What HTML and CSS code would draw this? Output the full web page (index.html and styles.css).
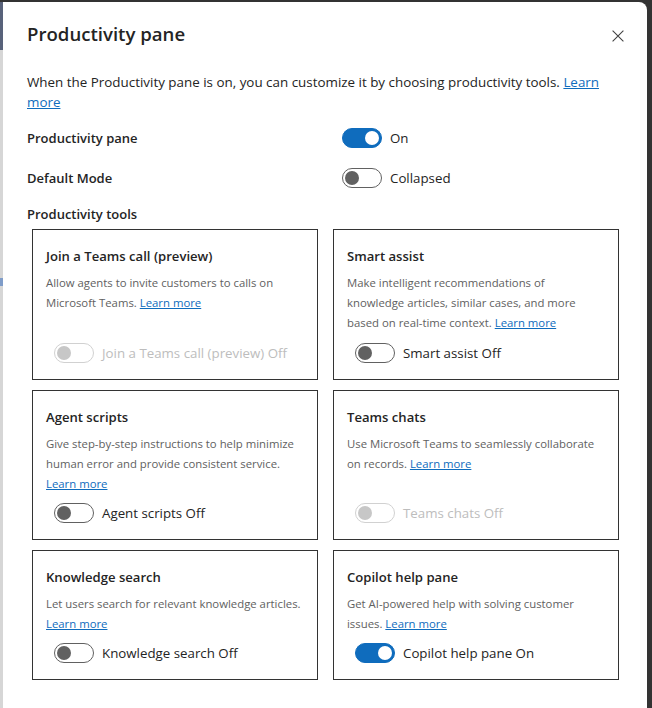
FILE: index.html
```html
<!DOCTYPE html>
<html lang="en">
<head>
<meta charset="utf-8">
<title>Productivity pane</title>
<link rel="stylesheet" href="styles.css">
</head>
<body>
<div class="backdrop">
  <div class="strip"></div>
  <section class="dialog" role="dialog" aria-labelledby="dlg-title">
    <header class="dialog-header">
      <h1 class="dialog-title" id="dlg-title">Productivity pane</h1>
      <button class="close" aria-label="Close">
        <svg width="12" height="12" viewBox="0 0 12 12" aria-hidden="true"><path d="M0.6 0.6 L11.4 11.4 M11.4 0.6 L0.6 11.4" stroke="#424242" stroke-width="1.1" fill="none"/></svg>
      </button>
    </header>
    <p class="intro">When the Productivity pane is on, you can customize it by choosing productivity tools. <a href="#">Learn<br>more</a></p>

    <div class="setting">
      <span class="setting-label">Productivity pane</span>
      <span class="switch on"><span class="thumb"></span></span>
      <span class="switch-text">On</span>
    </div>
    <div class="setting">
      <span class="setting-label">Default Mode</span>
      <span class="switch"><span class="thumb"></span></span>
      <span class="switch-text">Collapsed</span>
    </div>

    <h2 class="section-label">Productivity tools</h2>

    <div class="tools">
      <div class="card">
        <h3 class="card-title">Join a Teams call (preview)</h3>
        <p class="card-desc">Allow agents to invite customers to calls on<br>Microsoft Teams. <a href="#">Learn more</a></p>
        <div class="card-toggle disabled">
          <span class="switch"><span class="thumb"></span></span>
          <span class="switch-text">Join a Teams call (preview) Off</span>
        </div>
      </div>
      <div class="card">
        <h3 class="card-title">Smart assist</h3>
        <p class="card-desc">Make intelligent recommendations of<br>knowledge articles, similar cases, and more<br>based on real-time context. <a href="#">Learn more</a></p>
        <div class="card-toggle">
          <span class="switch"><span class="thumb"></span></span>
          <span class="switch-text">Smart assist Off</span>
        </div>
      </div>
      <div class="card">
        <h3 class="card-title">Agent scripts</h3>
        <p class="card-desc">Give step-by-step instructions to help minimize<br>human error and provide consistent service.<br><a href="#">Learn more</a></p>
        <div class="card-toggle">
          <span class="switch"><span class="thumb"></span></span>
          <span class="switch-text">Agent scripts Off</span>
        </div>
      </div>
      <div class="card">
        <h3 class="card-title">Teams chats</h3>
        <p class="card-desc">Use Microsoft Teams to seamlessly collaborate<br>on records. <a href="#">Learn more</a></p>
        <div class="card-toggle disabled">
          <span class="switch"><span class="thumb"></span></span>
          <span class="switch-text">Teams chats Off</span>
        </div>
      </div>
      <div class="card">
        <h3 class="card-title">Knowledge search</h3>
        <p class="card-desc">Let users search for relevant knowledge articles.<br><a href="#">Learn more</a></p>
        <div class="card-toggle">
          <span class="switch"><span class="thumb"></span></span>
          <span class="switch-text">Knowledge search Off</span>
        </div>
      </div>
      <div class="card">
        <h3 class="card-title">Copilot help pane</h3>
        <p class="card-desc">Get AI-powered help with solving customer<br>issues. <a href="#">Learn more</a></p>
        <div class="card-toggle">
          <span class="switch on"><span class="thumb"></span></span>
          <span class="switch-text">Copilot help pane On</span>
        </div>
      </div>
    </div>
  </section>
</div>
</body>
</html>
```

FILE: styles.css
```css
* { box-sizing: border-box; }

html, body {
  margin: 0;
  height: 100%;
}

body {
  background: #333333;
  font-family: "Segoe UI", "Open Sans", "Noto Sans", sans-serif;
  color: #242424;
  overflow: hidden;
}

.backdrop {
  display: flex;
  height: 100%;
  padding-top: 2px;
}

.strip {
  width: 3px;
  flex: none;
  background: linear-gradient(#58627a 0 48px, #d6d6d6 48px 276px, #7f9cc8 276px 284px, #d6d6d6 284px);
}

.dialog {
  width: 644px;
  flex: none;
  background: #ffffff;
  border-top-right-radius: 8px;
  padding: 18px 24px 0 24px;
}

.dialog-header {
  display: flex;
  justify-content: space-between;
  align-items: center;
}

.dialog-title {
  margin: 0;
  font-size: 18.6px;
  line-height: 28px;
  font-weight: 600;
}

.close {
  border: 0;
  background: none;
  padding: 0;
  width: 12px;
  height: 12px;
  margin-top: 4px;
  margin-right: -1px;
  display: flex;
}

.intro {
  margin: 24px 0 0;
  font-size: 13.4px;
  line-height: 20px;
}

a {
  color: #0f6cbd;
  text-decoration: underline;
}

.setting {
  display: flex;
  align-items: center;
  height: 32px;
  margin-top: 8px;
}

.setting:first-of-type { margin-top: 10px; }

.setting-label {
  width: 315px;
  font-size: 13px;
  font-weight: 600;
}

.switch {
  width: 40px;
  height: 20px;
  border: 1px solid #616161;
  border-radius: 10px;
  padding: 2px;
  display: flex;
  align-items: center;
  flex: none;
}

.thumb {
  width: 14px;
  height: 14px;
  border-radius: 50%;
  background: #616161;
}

.switch.on {
  background: #0f6cbd;
  border-color: #0f6cbd;
  justify-content: flex-end;
}

.switch.on .thumb { background: #ffffff; }

.switch-text {
  font-size: 13.3px;
  margin-left: 8px;
}

.section-label {
  margin: 10px 0 0;
  font-size: 13px;
  line-height: 20px;
  font-weight: 600;
}

.tools {
  display: grid;
  grid-template-columns: 286px 286px;
  grid-template-rows: 151px 150px 130px;
  column-gap: 15px;
  row-gap: 10px;
  margin: 5px 0 0 5px;
}

.card {
  border: 1px solid #333333;
  padding: 16px 13px 7px;
  display: flex;
  flex-direction: column;
}

.card-title {
  margin: 0 0 7px;
  font-size: 13.1px;
  line-height: 20px;
  font-weight: 600;
}

.card-desc {
  margin: 0;
  font-size: 11.35px;
  line-height: 20px;
  color: #616161;
  white-space: nowrap;
}

.card-toggle {
  margin-top: auto;
  height: 38px;
  padding-left: 8px;
  display: flex;
  align-items: center;
}

.card-toggle.disabled .switch { border-color: #d1d1d1; }
.card-toggle.disabled .thumb { background: #c7c7c7; }
.card-toggle.disabled .switch-text { color: #bdbdbd; }
```
